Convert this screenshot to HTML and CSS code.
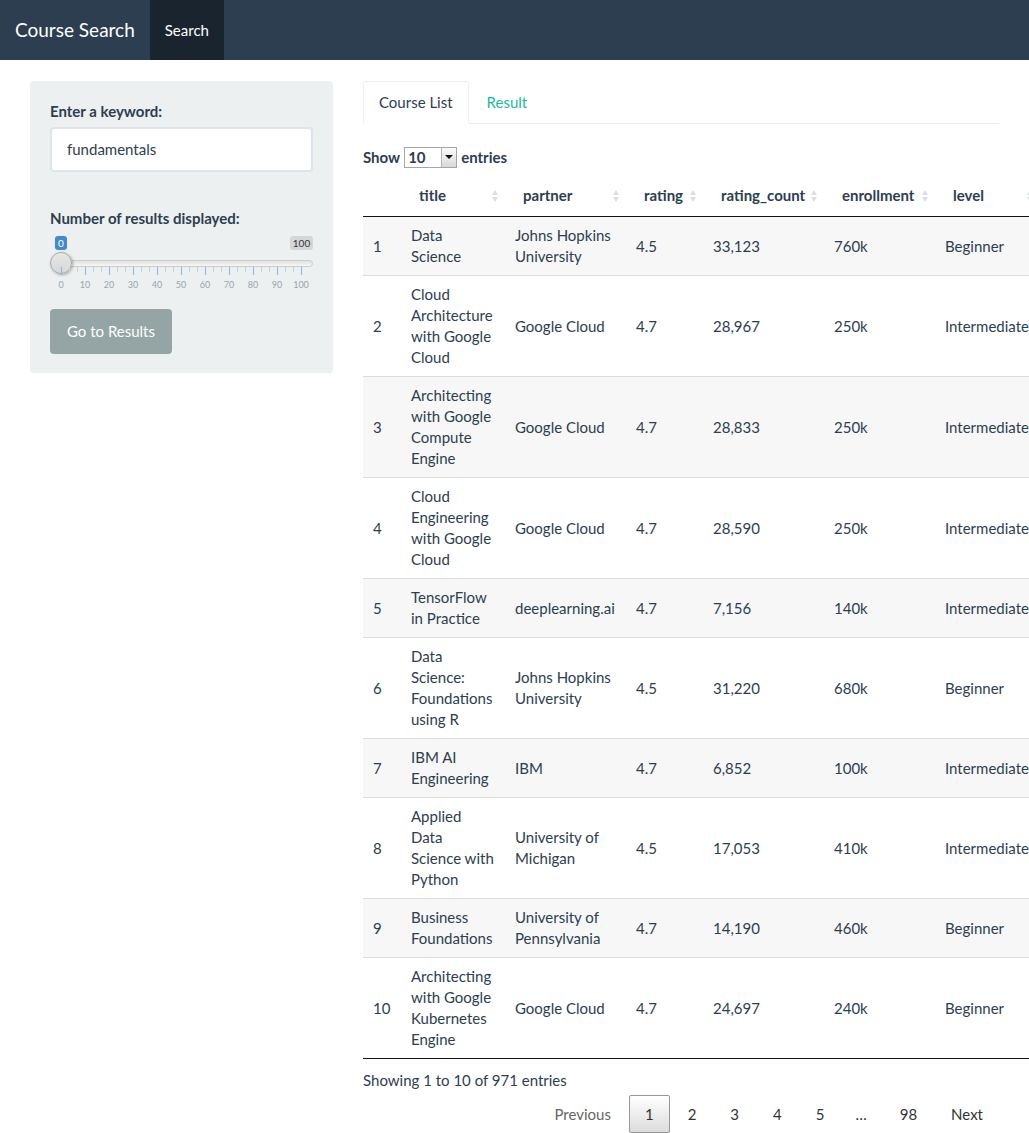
FILE: index.html
```html
<!DOCTYPE html>
<html lang="en">
<head>
<meta charset="utf-8">
<title>Course Search</title>
<link rel="stylesheet" href="styles.css">
</head>
<body>
<nav class="navbar">
  <span class="brand">Course Search</span>
  <span class="nav-item active">Search</span>
</nav>
<div class="page">
  <div class="sidebar">
    <div class="well">
      <div class="form-group">
        <label class="label">Enter a keyword:</label>
        <div class="input">fundamentals</div>
      </div>
      <div class="form-group slider-group">
        <label class="label">Number of results displayed:</label>
        <div class="slider">
          <span class="badge badge-min">0</span>
          <span class="badge badge-max">100</span>
          <span class="line"></span>
          <span class="handle"></span>
          <span class="ticks-minor"></span>
          <span class="ticks-major"></span>
          <div class="grid-labels">
            <span>0</span><span>10</span><span>20</span><span>30</span><span>40</span><span>50</span><span>60</span><span>70</span><span>80</span><span>90</span><span>100</span>
          </div>
        </div>
      </div>
      <button class="btn">Go to Results</button>
    </div>
  </div>
  <div class="main">
    <ul class="tabs">
      <li class="tab active">Course List</li>
      <li class="tab link">Result</li>
    </ul>
    <div class="dt-length">Show <span class="select"><span class="select-val">10</span><span class="select-arrow"><span class="tri"></span></span></span> entries</div>
    <table class="dt">
      <colgroup>
        <col class="c-idx"><col class="c-title"><col class="c-partner"><col class="c-rating"><col class="c-count"><col class="c-enroll"><col class="c-level">
      </colgroup>
      <thead>
        <tr>
          <th></th>
          <th class="sort">title</th>
          <th class="sort">partner</th>
          <th class="sort">rating</th>
          <th class="sort">rating_count</th>
          <th class="sort">enrollment</th>
          <th class="sort">level</th>
        </tr>
      </thead>
      <tbody>
        <tr class="odd"><td>1</td><td>Data Science</td><td>Johns Hopkins University</td><td>4.5</td><td>33,123</td><td>760k</td><td>Beginner</td></tr>
        <tr><td>2</td><td>Cloud Architecture with Google Cloud</td><td>Google Cloud</td><td>4.7</td><td>28,967</td><td>250k</td><td>Intermediate</td></tr>
        <tr class="odd"><td>3</td><td>Architecting with Google Compute Engine</td><td>Google Cloud</td><td>4.7</td><td>28,833</td><td>250k</td><td>Intermediate</td></tr>
        <tr><td>4</td><td>Cloud Engineering with Google Cloud</td><td>Google Cloud</td><td>4.7</td><td>28,590</td><td>250k</td><td>Intermediate</td></tr>
        <tr class="odd"><td>5</td><td>TensorFlow in Practice</td><td>deeplearning.ai</td><td>4.7</td><td>7,156</td><td>140k</td><td>Intermediate</td></tr>
        <tr><td>6</td><td>Data Science: Foundations using R</td><td>Johns Hopkins University</td><td>4.5</td><td>31,220</td><td>680k</td><td>Beginner</td></tr>
        <tr class="odd"><td>7</td><td>IBM AI Engineering</td><td>IBM</td><td>4.7</td><td>6,852</td><td>100k</td><td>Intermediate</td></tr>
        <tr><td>8</td><td>Applied Data Science with Python</td><td>University of Michigan</td><td>4.5</td><td>17,053</td><td>410k</td><td>Intermediate</td></tr>
        <tr class="odd"><td>9</td><td>Business Foundations</td><td>University of Pennsylvania</td><td>4.7</td><td>14,190</td><td>460k</td><td>Beginner</td></tr>
        <tr><td>10</td><td>Architecting with Google Kubernetes Engine</td><td>Google Cloud</td><td>4.7</td><td>24,697</td><td>240k</td><td>Beginner</td></tr>
      </tbody>
    </table>
    <div class="dt-info">Showing 1 to 10 of 971 entries</div>
    <div class="dt-paginate">
      <span class="pg disabled">Previous</span>
      <span class="pg current">1</span>
      <span class="pg">2</span>
      <span class="pg">3</span>
      <span class="pg">4</span>
      <span class="pg">5</span>
      <span class="ellipsis">…</span>
      <span class="pg">98</span>
      <span class="pg">Next</span>
    </div>
  </div>
</div>
</body>
</html>
```
FILE: styles.css
```css
html {
  overflow: hidden;
}
body {
  margin: 0;
  font-family: Lato, "Helvetica Neue", Arial, sans-serif;
  font-size: 15px;
  line-height: 21px;
  color: #2c3e50;
  background: #fff;
}

/* navbar */
.navbar {
  display: flex;
  height: 60px;
  background: #2c3e50;
  margin-bottom: 21px;
}
.brand {
  padding: 0 15px;
  font-size: 19px;
  line-height: 60px;
  color: #fff;
}
.nav-item {
  padding: 0 15px;
  line-height: 60px;
  color: #fff;
}
.nav-item.active {
  background: #1a242f;
}

/* layout */
.page {
  display: flex;
  padding: 0 15px;
  align-items: flex-start;
}
.sidebar {
  width: 333px;
  flex: 0 0 333px;
  padding: 0 15px;
  box-sizing: border-box;
}
.main {
  width: 666px;
  flex: 0 0 666px;
  padding: 0 15px;
  box-sizing: border-box;
}

/* well */
.well {
  background: #ecf0f1;
  border-radius: 4px;
  padding: 20px 20px 19px;
}
.form-group {
  margin-bottom: 15px;
}
.slider-group {
  margin-top: 36px;
  margin-bottom: 16px;
}
.label {
  display: block;
  font-weight: 700;
  margin-bottom: 5px;
}
.input {
  height: 45px;
  box-sizing: border-box;
  padding: 10px 15px;
  border: 2px solid #dce4ec;
  border-radius: 4px;
  background: #fff;
  line-height: 21px;
  color: #2c3e50;
}

/* slider */
.slider {
  position: relative;
  height: 59px;
}
.badge {
  position: absolute;
  top: 2px;
  height: 14px;
  line-height: 14px;
  font-size: 10px;
  border-radius: 3px;
  text-align: center;
}
.badge-min {
  left: 5px;
  width: 12px;
  background: #428bca;
  color: #fff;
}
.badge-max {
  right: 0;
  width: 23px;
  background: rgba(0, 0, 0, 0.1);
  color: #333;
}
.line {
  position: absolute;
  left: 0;
  right: 0;
  top: 26px;
  height: 7px;
  box-sizing: border-box;
  border: 1px solid #cccccc;
  border-radius: 8px;
  background: linear-gradient(#e2e2e2, #f6f6f6);
}
.handle {
  position: absolute;
  left: 0;
  top: 18px;
  width: 22px;
  height: 22px;
  box-sizing: border-box;
  border-radius: 50%;
  border: 1px solid #a9a9a9;
  background: linear-gradient(#e6e6e6, #d8d8d8);
  box-shadow: 1px 1px 3px rgba(0, 0, 0, 0.3);
}
.ticks-minor {
  position: absolute;
  left: 11px;
  top: 33px;
  width: 241px;
  height: 5px;
  background: repeating-linear-gradient(to right, #c8ced2 0 1px, transparent 1px 8px);
}
.ticks-major {
  position: absolute;
  left: 11px;
  top: 33px;
  width: 241px;
  height: 8px;
  background: repeating-linear-gradient(to right, #8cb6dd 0 1px, transparent 1px 24px);
}
.grid-labels {
  position: absolute;
  left: -1px;
  top: 45px;
  display: flex;
  font-size: 9px;
  line-height: 12px;
  color: #99a4ac;
}
.grid-labels span {
  width: 24px;
  text-align: center;
}
.btn {
  display: block;
  height: 45px;
  padding: 0 17px;
  border: none;
  border-radius: 4px;
  background: #95a5a6;
  color: #fff;
  font: inherit;
  line-height: 45px;
}

/* tabs */
.tabs {
  list-style: none;
  margin: 0;
  padding: 0;
  display: flex;
  border-bottom: 1px solid #ecf0f1;
}
.tab {
  padding: 10px 15px;
  margin-right: 2px;
  margin-bottom: -1px;
  border: 1px solid transparent;
  border-radius: 4px 4px 0 0;
}
.tab.active {
  border-color: #ecf0f1 #ecf0f1 transparent;
  background: #fff;
  color: #2c3e50;
}
.tab.link {
  color: #18bc9c;
}

/* datatable */
.dt-length {
  margin-top: 22px;
  font-weight: 700;
  display: flex;
  align-items: center;
  gap: 4px;
  height: 22px;
}
.select {
  display: inline-flex;
  width: 53px;
  height: 21px;
  box-sizing: border-box;
  border: 1px solid #a6a6a6;
  background: #fff;
}
.select-val {
  flex: 1;
  padding-left: 3px;
  line-height: 19px;
}
.select-arrow {
  width: 14px;
  border-left: 1px solid #b5b5b5;
  background: linear-gradient(#fafafa, #d9d9d9);
  display: flex;
  align-items: center;
  justify-content: center;
}
.tri {
  width: 0;
  height: 0;
  border-left: 4px solid transparent;
  border-right: 4px solid transparent;
  border-top: 4px solid #111;
}
.dt {
  margin-top: 7px;
  border-collapse: collapse;
  table-layout: fixed;
  width: 677px;
  border-bottom: 1px solid #111;
}
.c-idx { width: 38px; }
.c-title { width: 104px; }
.c-partner { width: 121px; }
.c-rating { width: 77px; }
.c-count { width: 121px; }
.c-enroll { width: 111px; }
.c-level { width: 105px; }
.dt th {
  text-align: left;
  font-weight: 700;
  padding: 10px 18px;
  border-bottom: 1px solid #111;
  white-space: nowrap;
  position: relative;
}
.dt th.sort::before,
.dt th.sort::after {
  content: "";
  position: absolute;
  right: 7px;
  width: 0;
  height: 0;
  border-left: 3.5px solid transparent;
  border-right: 3.5px solid transparent;
}
.dt th.sort::before {
  top: 15px;
  border-bottom: 5px solid #dcdfe1;
}
.dt th.sort::after {
  top: 22px;
  border-top: 5px solid #dcdfe1;
}
.dt td {
  padding: 8px 10px;
  border-top: 1px solid #ddd;
  vertical-align: middle;
}
.dt tbody tr:first-child td {
  border-top: none;
}
.dt tr.odd td {
  background: #f7f7f7;
}
.dt-info {
  padding-top: 11px;
}
.dt-paginate {
  padding-top: 4px;
  display: flex;
  justify-content: flex-end;
  align-items: center;
}
.pg {
  box-sizing: border-box;
  min-width: 22px;
  padding: 7.5px 15px;
  margin-left: 2px;
  border: 1px solid transparent;
  border-radius: 2px;
  text-align: center;
  color: #333;
}
.pg.disabled {
  color: #666;
}
.pg.current {
  border-color: #979797;
  background: linear-gradient(#ffffff, #dcdcdc);
}
.ellipsis {
  padding: 0 15px;
  color: #333;
}
```
